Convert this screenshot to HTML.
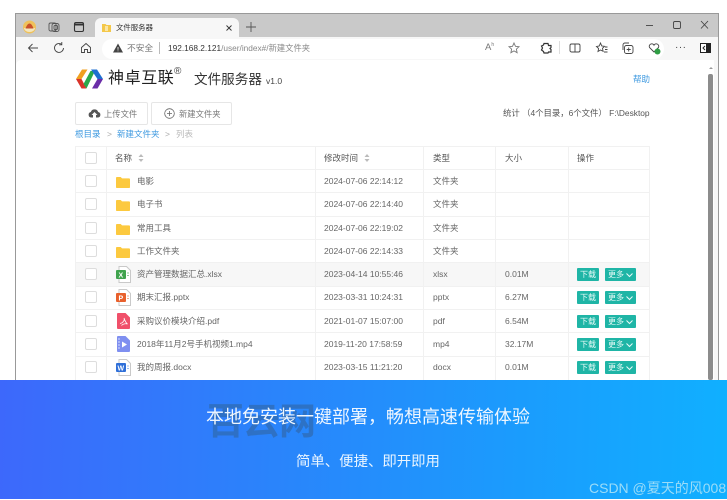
<!DOCTYPE html>
<html><head><meta charset="utf-8">
<style>
*{box-sizing:border-box}
html,body{margin:0;padding:0;background:#fff}
body{width:727px;height:500px;overflow:hidden;position:relative;font-family:"Liberation Sans","Noto Sans CJK SC",sans-serif;color:#666}
#w{position:absolute;left:0;top:0;width:727px;height:500px;overflow:hidden;filter:blur(.35px)}
.a{position:absolute;white-space:nowrap}
svg{position:absolute;overflow:visible}
.t{font-size:8.500px;line-height:12px;color:#666}
.ln{position:absolute;background:#f1f1f1}
.cb{position:absolute;left:85px;width:12px;height:12px;border:1px solid #ddd;border-radius:2px;background:#fff}
.btn{position:absolute;height:13px;background:#1fb5a6;color:#e8fbf8;font-size:8px;line-height:13px;text-align:center;border-radius:1px}
</style></head><body><div id="w">
<!-- window -->
<div class="a" style="left:15px;top:13px;width:704px;height:369px;background:#f7f7f7;border:1px solid #999;border-bottom:0"></div>
<div class="a" style="left:16px;top:14px;width:702px;height:23px;background:#c9c9c9"></div>
<div class="a" style="left:95px;top:18px;width:144px;height:20px;background:#f7f7f7;border-radius:6px 6px 0 0"></div>
<div class="a" style="left:16px;top:60px;width:698px;height:322px;background:#fff;border-radius:5px 0 0 0"></div>
<div class="a" style="left:708px;top:74px;width:5px;height:306px;background:#8c8c8c;border-radius:2px"></div>
<svg style="left:708px;top:65px" width="6" height="5"><path d="M1 4L3 2L5 4" fill="#999"/></svg>
<!-- left tab icons -->
<svg style="left:22px;top:19px" width="16" height="16" viewBox="0 0 16 16"><circle cx="7.500" cy="8" r="6.500" fill="#efc15a"/><path d="M2 9h11a5.500 4 0 0 1-11 0z" fill="#f4e6bd"/><path d="M3.500 9.500C4.500 6.500 6 4.500 7.500 4.500S10.500 6.500 11.500 9.500z" fill="#c9502a"/></svg>
<svg style="left:48px;top:21px" width="12" height="12" viewBox="0 0 12 12" fill="none" stroke="#555" stroke-width=".9"><rect x="1" y="2" width="7" height="8" rx="1.500"/><rect x="4" y="2.500" width="7" height="8" rx="2"/><rect x="6" y="4.500" width="3.500" height="4" rx="1"/></svg>
<svg style="left:73px;top:21px" width="12" height="12" viewBox="0 0 12 12" fill="none" stroke="#333" stroke-width="1.100"><rect x="1.500" y="1.500" width="9" height="9" rx="1.500"/><path d="M1.500 3.500h9" stroke-width="2"/></svg>
<svg style="left:102px;top:23px" width="9" height="9" viewBox="0 0 9 9"><path d="M0 1h3.500l1 1H9v7H0z" fill="#f4c84a"/><path d="M3 3h3v5H3z" fill="#fbe6a5"/></svg>
<div class="a" style="left:116px;top:22px;font-size:7.400px;line-height:11px;color:#333">文件服务器</div>
<svg style="left:226px;top:25px" width="6" height="6" viewBox="0 0 6 6" fill="none" stroke="#333" stroke-width=".9"><path d="M.5.500l5 5M5.500.500l-5 5"/></svg>
<svg style="left:246px;top:22px" width="10" height="10" viewBox="0 0 10 10" fill="none" stroke="#555" stroke-width=".9"><path d="M5 0v10M0 5h10"/></svg>
<!-- window controls -->
<svg style="left:646px;top:20px" width="64" height="10" fill="none" stroke="#444" stroke-width=".9"><path d="M0 5.500h7"/><rect x="27.500" y="1.500" width="7" height="7" rx="1.400"/><path d="M55 1l7 7.500M62 1l-7 7.500"/></svg>
<!-- toolbar -->
<svg style="left:27px;top:42px" width="12" height="12" viewBox="0 0 12 12" fill="none" stroke="#444" stroke-width=".9"><path d="M11 6H1.500M5.500 2L1.500 6l4 4"/></svg>
<svg style="left:53px;top:42px" width="12" height="12" viewBox="0 0 12 12" fill="none" stroke="#444" stroke-width=".9"><path d="M8.500 2.200A4.500 4.500 0 1 0 10.500 6M8.800 0v2.800H6"/></svg>
<svg style="left:80px;top:42px" width="12" height="12" viewBox="0 0 12 12" fill="none" stroke="#444" stroke-width=".9"><path d="M1.500 5.500L6 1.500l4.500 4v5h-3v-3h-3v3h-3z"/></svg>
<div class="a" style="left:102px;top:39px;width:562px;height:20px;background:#fff;border-radius:10px"></div>
<svg style="left:113px;top:43px" width="10" height="10" viewBox="0 0 10 10"><path d="M5 .500L10 9.500H0z" fill="#444"/><path d="M5 4v2.800M5 7.500v.800" stroke="#eee" stroke-width=".9"/></svg>
<div class="a" style="left:127px;top:42px;font-size:8.700px;line-height:12px;color:#777">不安全</div>
<div class="a" style="left:159px;top:42px;width:1px;height:12px;background:#bbb"></div>
<div class="a" style="left:168px;top:42px;font-size:8.300px;line-height:12px;color:#333">192.168.2.121<span style="color:#888">/user/index#/新建文件夹</span></div>
<div class="a" style="left:485px;top:42px;font-size:9.500px;line-height:12px;color:#777">A<sup style="font-size:5px;line-height:0">h</sup></div>
<svg style="left:508px;top:42px" width="12" height="12" viewBox="0 0 12 12" fill="none" stroke="#777" stroke-width=".9"><path d="M6 1l1.500 3.300 3.500.4-2.600 2.400.7 3.600L6 8.900l-3.100 1.800.7-3.600L1 4.700l3.500-.4z"/></svg>
<svg style="left:540px;top:42px" width="12" height="12" viewBox="0 0 12 12" fill="none" stroke="#333" stroke-width="1.200"><path d="M4 1.500h4l.5 2h2.500v2l-1 1 1 1v2.500H8.500L8 11H4l-.5-1.500L1.500 8l1-2-1-2 2-1z"/></svg>
<div class="a" style="left:559px;top:41px;width:1px;height:13px;background:#ddd"></div>
<svg style="left:569px;top:42px" width="12" height="12" viewBox="0 0 12 12" fill="none" stroke="#444" stroke-width=".9"><rect x="1" y="2" width="10" height="8" rx="1.500"/><path d="M6 2v8"/></svg>
<svg style="left:595px;top:42px" width="13" height="12" viewBox="0 0 13 12" fill="none" stroke="#444" stroke-width=".9"><path d="M5.500 1l1.300 3 2.700.3-2 2 .6 3L5.500 8 3 9.500l.6-3-2.100-2L4.200 4zM10 5h2.500M10 7.500h2.500M9 10h3.500"/></svg>
<svg style="left:621px;top:42px" width="13" height="12" viewBox="0 0 13 12" fill="none" stroke="#444" stroke-width=".9"><rect x="3.500" y="3.500" width="8.500" height="8" rx="2"/><path d="M2 8V3a2 2 0 0 1 2-2h4M7.700 5.500v4M5.700 7.500h4"/></svg>
<svg style="left:648px;top:42px" width="13" height="13" viewBox="0 0 13 13"><path d="M6 10L1.500 5.500a2.400 2.400 0 0 1 4.500-2.300 2.400 2.400 0 0 1 4.500 2.300z" fill="none" stroke="#444" stroke-width=".9"/><circle cx="9.500" cy="9.500" r="3" fill="#2f9e44"/></svg>
<div class="a" style="left:675px;top:42px;font-size:10px;line-height:12px;color:#444;letter-spacing:.5px">···</div>
<svg style="left:700px;top:43px" width="11" height="10" viewBox="0 0 11 10"><rect x=".500" y=".500" width="10" height="9" fill="#fff" stroke="#222"/><rect x="6" y="0" width="5" height="10" fill="#222"/><path d="M5 3L3 5l2 2" stroke="#222" fill="none"/></svg>
<!-- logo -->
<svg style="left:76px;top:69px" width="27" height="20" viewBox="0 0 27 20">
<path d="M6 .5H11.500L5.500 10H0z" fill="#f0a020"/>
<path d="M0 10H5.500L10.500 19.500H5.500z" fill="#d9342b"/>
<path d="M7.500 15L14.500 2H19L10.500 19.500z" fill="#2aa84a"/>
<path d="M15 .5H21L27 10H21.500z" fill="#1f6fd0"/>
<path d="M27 10H21.500L16 19.500H21.500z" fill="#6a2da8"/>
</svg>
<div class="a" style="left:108px;top:68px;font-size:16px;line-height:22px;color:#222;letter-spacing:.6px">神卓互联</div>
<div class="a" style="left:174px;top:66px;font-size:10px;line-height:11px;color:#444">®</div>
<div class="a" style="left:194px;top:70px;font-size:13.600px;line-height:20px;color:#333">文件服务器</div>
<div class="a" style="left:266px;top:76px;font-size:8.500px;line-height:11px;color:#444">v1.0</div>
<div class="a" style="left:633px;top:74px;font-size:8.500px;line-height:11px;color:#3f9ae0">帮助</div>
<!-- buttons -->
<div class="a" style="left:75px;top:102px;width:73px;height:23px;border:1px solid #e6e6e6;border-radius:2px"></div>
<div class="a" style="left:151px;top:102px;width:81px;height:23px;border:1px solid #e6e6e6;border-radius:2px"></div>
<svg style="left:88px;top:108px" width="13" height="11" viewBox="0 0 13 11"><path d="M3 9.500a2.800 2.800 0 0 1-.2-5.500 3.900 3.900 0 0 1 7.400 0 2.800 2.800 0 0 1-.2 5.500H8V7h1.500L6.500 4 3.500 7H5v2.500z" fill="#555"/></svg>
<div class="a t" style="left:104px;top:108px;color:#777;font-size:8.300px">上传文件</div>
<svg style="left:164px;top:108px" width="11" height="11" viewBox="0 0 11 11" fill="none" stroke="#666" stroke-width=".8"><circle cx="5.500" cy="5.500" r="4.800"/><path d="M5.500 3v5M3 5.500h5"/></svg>
<div class="a t" style="left:179px;top:108px;color:#777;font-size:8.300px">新建文件夹</div>
<div class="a t" style="left:503px;top:107px;color:#555;font-size:8.400px">统计 （4个目录，6个文件） F:\Desktop</div>
<!-- breadcrumb -->
<div class="a" style="left:75px;top:129px;font-size:8.500px;line-height:11px;color:#3f9ae0">根目录</div>
<div class="a" style="left:107px;top:129px;font-size:8.500px;line-height:11px;color:#aaa">&gt;</div>
<div class="a" style="left:117px;top:129px;font-size:8.500px;line-height:11px;color:#3f9ae0">新建文件夹</div>
<div class="a" style="left:165px;top:129px;font-size:8.500px;line-height:11px;color:#aaa">&gt;</div>
<div class="a" style="left:176px;top:129px;font-size:8.500px;line-height:11px;color:#bbb">列表</div>
<!-- table -->
<div class="a" style="left:76px;top:263px;width:573px;height:23px;background:#f7f7f7"></div>
<div class="ln" style="left:75px;top:146px;width:575px;height:1px"></div>
<div class="ln" style="left:75px;top:169px;width:575px;height:1px"></div>
<div class="ln" style="left:75px;top:192px;width:575px;height:1px"></div>
<div class="ln" style="left:75px;top:216px;width:575px;height:1px"></div>
<div class="ln" style="left:75px;top:239px;width:575px;height:1px"></div>
<div class="ln" style="left:75px;top:262px;width:575px;height:1px"></div>
<div class="ln" style="left:75px;top:286px;width:575px;height:1px"></div>
<div class="ln" style="left:75px;top:309px;width:575px;height:1px"></div>
<div class="ln" style="left:75px;top:332px;width:575px;height:1px"></div>
<div class="ln" style="left:75px;top:356px;width:575px;height:1px"></div>
<div class="ln" style="left:75px;top:146px;width:1px;height:234px"></div>
<div class="ln" style="left:106px;top:146px;width:1px;height:234px"></div>
<div class="ln" style="left:315px;top:146px;width:1px;height:234px"></div>
<div class="ln" style="left:423px;top:146px;width:1px;height:234px"></div>
<div class="ln" style="left:495px;top:146px;width:1px;height:234px"></div>
<div class="ln" style="left:568px;top:146px;width:1px;height:234px"></div>
<div class="ln" style="left:649px;top:146px;width:1px;height:234px"></div>
<!-- header -->
<div class="cb" style="top:152px"></div>
<div class="a t" style="left:115px;top:152px;color:#555">名称</div>
<svg style="left:138px;top:154px" width="6" height="8"><path d="M3 0l2.500 3h-5zM3 8L.5 5h5z" fill="#bbb"/></svg>
<div class="a t" style="left:324px;top:152px;color:#555">修改时间</div>
<svg style="left:364px;top:154px" width="6" height="8"><path d="M3 0l2.500 3h-5zM3 8L.5 5h5z" fill="#bbb"/></svg>
<div class="a t" style="left:433px;top:152px;color:#555">类型</div>
<div class="a t" style="left:505px;top:152px;color:#555">大小</div>
<div class="a t" style="left:577px;top:152px;color:#555">操作</div>
<!-- folder rows -->
<div class="cb" style="top:175px"></div><div class="cb" style="top:198px"></div><div class="cb" style="top:222px"></div><div class="cb" style="top:245px"></div><div class="cb" style="top:268px"></div><div class="cb" style="top:291px"></div><div class="cb" style="top:315px"></div><div class="cb" style="top:338px"></div><div class="cb" style="top:361px"></div>
<svg style="left:116px;top:177px" width="14" height="11" viewBox="0 0 15 12" preserveAspectRatio="none"><path d="M0 1a1 1 0 0 1 1-1h4l1.500 1.500H14a1 1 0 0 1 1 1V11a1 1 0 0 1-1 1H1a1 1 0 0 1-1-1z" fill="#fcc93f"/></svg>
<svg style="left:116px;top:200px" width="14" height="11" viewBox="0 0 15 12" preserveAspectRatio="none"><path d="M0 1a1 1 0 0 1 1-1h4l1.500 1.500H14a1 1 0 0 1 1 1V11a1 1 0 0 1-1 1H1a1 1 0 0 1-1-1z" fill="#fcc93f"/></svg>
<svg style="left:116px;top:224px" width="14" height="11" viewBox="0 0 15 12" preserveAspectRatio="none"><path d="M0 1a1 1 0 0 1 1-1h4l1.500 1.500H14a1 1 0 0 1 1 1V11a1 1 0 0 1-1 1H1a1 1 0 0 1-1-1z" fill="#fcc93f"/></svg>
<svg style="left:116px;top:247px" width="14" height="11" viewBox="0 0 15 12" preserveAspectRatio="none"><path d="M0 1a1 1 0 0 1 1-1h4l1.500 1.500H14a1 1 0 0 1 1 1V11a1 1 0 0 1-1 1H1a1 1 0 0 1-1-1z" fill="#fcc93f"/></svg>
<div class="a t" style="left:137px;top:175px">电影</div>
<div class="a t" style="left:137px;top:198px">电子书</div>
<div class="a t" style="left:137px;top:222px">常用工具</div>
<div class="a t" style="left:137px;top:245px">工作文件夹</div>
<!-- file icons -->
<svg style="left:116px;top:266px" width="15" height="17" viewBox="0 0 15 17"><path d="M3 .5h7.500L14.500 4.500V16.500H3z" fill="#fff" stroke="#c9c9c9"/><rect x="0" y="4" width="10" height="9" rx="1" fill="#3fa34d"/><text x="2.500" y="11.500" font-size="7" font-weight="700" fill="#fff" font-family="Liberation Sans">X</text><path d="M11 7h2M11 9.500h2" stroke="#8ccb96"/></svg>
<svg style="left:116px;top:289px" width="15" height="17" viewBox="0 0 15 17"><path d="M3 .5h7.500L14.500 4.500V16.500H3z" fill="#fff" stroke="#c9c9c9"/><rect x="0" y="4" width="10" height="9" rx="1" fill="#e8602c"/><text x="2.500" y="11.500" font-size="7" font-weight="700" fill="#fff" font-family="Liberation Sans">P</text><path d="M11 7h2M11 9.500h2" stroke="#f0a98a"/></svg>
<svg style="left:117px;top:313px" width="13" height="16" viewBox="0 0 13 16"><path d="M0 1a1 1 0 0 1 1-1h7.500L13 4.500V15a1 1 0 0 1-1 1H1a1 1 0 0 1-1-1z" fill="#f0506a"/><path d="M3 10.500C6 10 8 7 7 5c1 3 2 5 3.500 6C8.500 10.500 6 11 4.500 12.500" fill="none" stroke="#fff" stroke-width=".8"/></svg>
<svg style="left:117px;top:336px" width="13" height="16" viewBox="0 0 13 16"><path d="M0 1a1 1 0 0 1 1-1h7.500L13 4.500V15a1 1 0 0 1-1 1H1a1 1 0 0 1-1-1z" fill="#7f8ff0"/><path d="M5 5.500l5 3-5 3z" fill="#fff"/><path d="M1 3h2M1 6h2M1 9h2M1 12h2" stroke="#d5dbfb"/></svg>
<svg style="left:116px;top:359px" width="15" height="17" viewBox="0 0 15 17"><path d="M3 .5h7.500L14.500 4.500V16.500H3z" fill="#fff" stroke="#c9c9c9"/><rect x="0" y="4" width="10" height="9" rx="1" fill="#2f6fd8"/><text x="1.500" y="11.500" font-size="7" font-weight="700" fill="#fff" font-family="Liberation Sans">W</text><path d="M11 7h2M11 9.500h2" stroke="#9dbcf0"/></svg>
<div class="a t" style="left:137px;top:268px">资产管理数据汇总.xlsx</div>
<div class="a t" style="left:137px;top:291px">期末汇报.pptx</div>
<div class="a t" style="left:137px;top:315px">采购议价模块介绍.pdf</div>
<div class="a t" style="left:137px;top:338px">2018年11月2号手机视频1.mp4</div>
<div class="a t" style="left:137px;top:361px">我的周报.docx</div>
<!-- times -->
<div class="a t" style="left:324px;top:175px">2024-07-06 22:14:12</div>
<div class="a t" style="left:324px;top:198px">2024-07-06 22:14:40</div>
<div class="a t" style="left:324px;top:222px">2024-07-06 22:19:02</div>
<div class="a t" style="left:324px;top:245px">2024-07-06 22:14:33</div>
<div class="a t" style="left:324px;top:268px">2023-04-14 10:55:46</div>
<div class="a t" style="left:324px;top:291px">2023-03-31 10:24:31</div>
<div class="a t" style="left:324px;top:315px">2021-01-07 15:07:00</div>
<div class="a t" style="left:324px;top:338px">2019-11-20 17:58:59</div>
<div class="a t" style="left:324px;top:361px">2023-03-15 11:21:20</div>
<!-- types -->
<div class="a t" style="left:433px;top:175px">文件夹</div>
<div class="a t" style="left:433px;top:198px">文件夹</div>
<div class="a t" style="left:433px;top:222px">文件夹</div>
<div class="a t" style="left:433px;top:245px">文件夹</div>
<div class="a t" style="left:433px;top:268px">xlsx</div>
<div class="a t" style="left:433px;top:291px">pptx</div>
<div class="a t" style="left:433px;top:315px">pdf</div>
<div class="a t" style="left:433px;top:338px">mp4</div>
<div class="a t" style="left:433px;top:361px">docx</div>
<!-- sizes -->
<div class="a t" style="left:505px;top:268px">0.01M</div>
<div class="a t" style="left:505px;top:291px">6.27M</div>
<div class="a t" style="left:505px;top:315px">6.54M</div>
<div class="a t" style="left:505px;top:338px">32.17M</div>
<div class="a t" style="left:505px;top:361px">0.01M</div>
<!-- action buttons -->
<div class="btn" style="left:577px;top:268px;width:22px">下载</div><div class="btn" style="left:605px;top:268px;width:31px;text-align:left;padding-left:3px">更多<svg style="left:21px;top:5px" width="7" height="4" fill="none" stroke="#e8fbf8"><path d="M.5.500L3.500 3.500 6.500.500"/></svg></div>
<div class="btn" style="left:577px;top:291px;width:22px">下载</div><div class="btn" style="left:605px;top:291px;width:31px;text-align:left;padding-left:3px">更多<svg style="left:21px;top:5px" width="7" height="4" fill="none" stroke="#e8fbf8"><path d="M.5.500L3.500 3.500 6.500.500"/></svg></div>
<div class="btn" style="left:577px;top:315px;width:22px">下载</div><div class="btn" style="left:605px;top:315px;width:31px;text-align:left;padding-left:3px">更多<svg style="left:21px;top:5px" width="7" height="4" fill="none" stroke="#e8fbf8"><path d="M.5.500L3.500 3.500 6.500.500"/></svg></div>
<div class="btn" style="left:577px;top:338px;width:22px">下载</div><div class="btn" style="left:605px;top:338px;width:31px;text-align:left;padding-left:3px">更多<svg style="left:21px;top:5px" width="7" height="4" fill="none" stroke="#e8fbf8"><path d="M.5.500L3.500 3.500 6.500.500"/></svg></div>
<div class="btn" style="left:577px;top:361px;width:22px">下载</div><div class="btn" style="left:605px;top:361px;width:31px;text-align:left;padding-left:3px">更多<svg style="left:21px;top:5px" width="7" height="4" fill="none" stroke="#e8fbf8"><path d="M.5.500L3.500 3.500 6.500.500"/></svg></div>
<!-- banner -->
<div class="a" style="left:0;top:380px;width:727px;height:119px;background:linear-gradient(92deg,#3d68fb 0%,#2a84fb 38%,#1b9bfd 70%,#10b0ff 100%)"></div>
<div class="a" style="left:207px;top:404px;font-size:37px;line-height:36px;font-weight:700;color:#2f6db8;letter-spacing:-1px;opacity:.8">百云网</div>
<div class="a" style="left:206px;top:405px;font-size:18px;line-height:24px;color:#eef6ff">本地免安装一键部署，畅想高速传输体验</div>
<div class="a" style="left:296px;top:452px;font-size:14.400px;line-height:20px;color:#eaf5ff">简单、便捷、即开即用</div>
<div class="a" style="left:589px;top:479px;font-size:14px;line-height:18px;color:#9bdcf8">CSDN @夏天的风008</div>
</div></body></html>
